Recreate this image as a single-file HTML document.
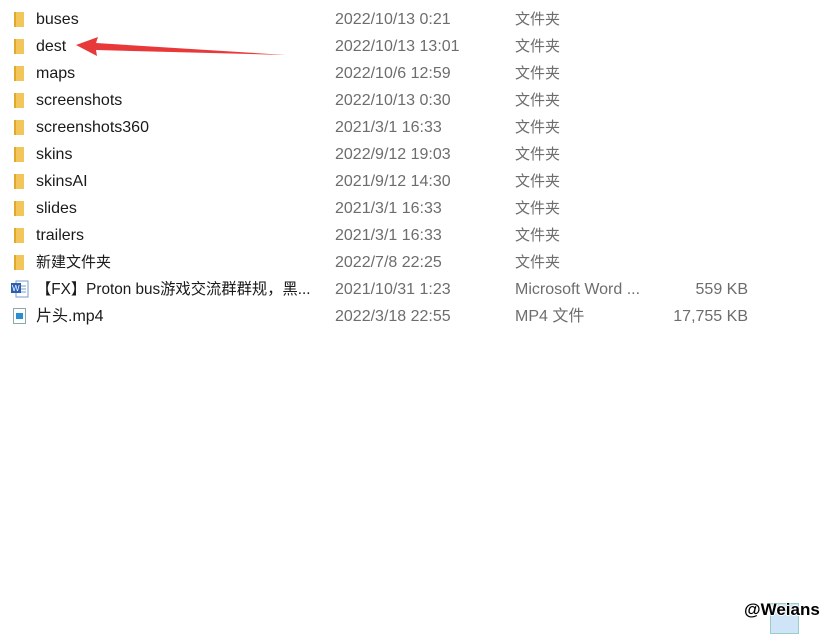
<!DOCTYPE html>
<html><head><meta charset="utf-8"><style>
body{margin:0;width:833px;height:632px;background:#fff;position:relative;overflow:hidden;font-family:"Liberation Sans","Noto Sans CJK SC",sans-serif;font-size:16px;color:#1a1a1a}
.r{position:absolute;left:0;height:27px;width:833px}
.r span{position:absolute;top:-8px;line-height:18px;white-space:nowrap}
.n{left:36px}.d{left:335px;color:#6d6d6d}.t{left:515px;color:#6d6d6d;font-size:15px}.s{right:85px;color:#6d6d6d}
.f{position:absolute;left:14px;top:-7px;width:10px;height:15px;background:#f2c65a;border-left:2px solid #e0a92e;box-sizing:border-box}
</style></head><body>
<div class="r" style="top:19px"><i class="f"></i><span class="n">buses</span><span class="d">2022/10/13 0:21</span><span class="t">文件夹</span></div>
<div class="r" style="top:46px"><i class="f"></i><span class="n">dest</span><span class="d">2022/10/13 13:01</span><span class="t">文件夹</span></div>
<div class="r" style="top:73px"><i class="f"></i><span class="n">maps</span><span class="d">2022/10/6 12:59</span><span class="t">文件夹</span></div>
<div class="r" style="top:100px"><i class="f"></i><span class="n">screenshots</span><span class="d">2022/10/13 0:30</span><span class="t">文件夹</span></div>
<div class="r" style="top:127px"><i class="f"></i><span class="n">screenshots360</span><span class="d">2021/3/1 16:33</span><span class="t">文件夹</span></div>
<div class="r" style="top:154px"><i class="f"></i><span class="n">skins</span><span class="d">2022/9/12 19:03</span><span class="t">文件夹</span></div>
<div class="r" style="top:181px"><i class="f"></i><span class="n">skinsAI</span><span class="d">2021/9/12 14:30</span><span class="t">文件夹</span></div>
<div class="r" style="top:208px"><i class="f"></i><span class="n">slides</span><span class="d">2021/3/1 16:33</span><span class="t">文件夹</span></div>
<div class="r" style="top:235px"><i class="f"></i><span class="n">trailers</span><span class="d">2021/3/1 16:33</span><span class="t">文件夹</span></div>
<div class="r" style="top:262px"><i class="f"></i><span class="n" style="font-size:15px">新建文件夹</span><span class="d">2022/7/8 22:25</span><span class="t">文件夹</span></div>
<div class="r" style="top:289px"><svg style="position:absolute;left:10px;top:-9px" width="20" height="18"><rect x="6" y="1" width="12" height="16" fill="#fff" stroke="#7a9cc8"/><line x1="11" y1="6" x2="16" y2="6" stroke="#7a9cc8"/><line x1="11" y1="9" x2="16" y2="9" stroke="#7a9cc8"/><line x1="11" y1="12" x2="16" y2="12" stroke="#7a9cc8"/><rect x="1" y="3" width="10" height="10" fill="#2b5fb3"/><text x="2" y="11" font-size="8" fill="#fff" font-family="Liberation Sans">W</text></svg><span class="n" style="font-size:15.3px">【FX】Proton bus游戏交流群群规，黑...</span><span class="d">2021/10/31 1:23</span><span class="t" style="font-size:16px">Microsoft Word ...</span><span class="s">559 KB</span></div>
<div class="r" style="top:316px"><svg style="position:absolute;left:12px;top:-9px" width="16" height="18"><rect x="1.5" y="1.5" width="12" height="15" fill="#fff" stroke="#8aa"/><rect x="4" y="6" width="7" height="6" fill="#2a8fd0"/></svg><span class="n">片头.mp4</span><span class="d">2022/3/18 22:55</span><span class="t" style="font-size:16px">MP4 文件</span><span class="s">17,755 KB</span></div>
<svg style="position:absolute;left:0;top:0" width="833" height="632"><polygon points="76,45 98,37 96,43 286,55 96,50 97,56" fill="#e8393a"/></svg>
<div style="position:absolute;left:770px;top:603px;width:27px;height:29px;background:#cfe5f7;border:1px solid #9cc"></div>
<div style="position:absolute;left:744px;top:600px;font:bold 17px 'Liberation Sans',sans-serif;color:#000;text-shadow:1px 0 #fff,-1px 0 #fff,0 1px #fff,0 -1px #fff">@Weians</div>
</body></html>
